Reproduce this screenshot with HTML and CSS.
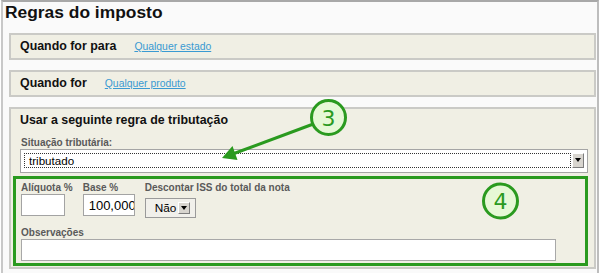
FILE: index.html
```html
<!DOCTYPE html>
<html lang="pt">

<head>
  <meta charset="UTF-8">
  <title>Regras do imposto</title>
  <link rel="stylesheet" href="styles.css">
</head>

<body>

  <div class="panel">
    <h1 class="title">Regras do imposto</h1>

    <div class="rule">
      <span class="rule-name">Quando for para</span>
      <a href="#" class="rule-link">Qualquer estado</a>
    </div>

    <div class="rule">
      <span class="rule-name">Quando for</span>
      <a href="#" class="rule-link">Qualquer produto</a>
    </div>

    <div class="rule rule-body">
      <div class="rule-name">Usar a seguinte regra de tributação</div>

      <div class="field-label first-label">Situação tributária:</div>
      <div class="select select-wide">
        <span class="select-focus">tributado</span>
        <span class="select-btn"></span>
      </div>

      <div class="field-row">
        <div class="field">
          <div class="field-label">Alíquota %</div>
          <input class="input input-aliquota" type="text" value="">
        </div>
        <div class="field">
          <div class="field-label">Base %</div>
          <input class="input input-base" type="text" value="100,000">
        </div>
        <div class="field">
          <div class="field-label">Descontar ISS do total da nota</div>
          <div class="select select-small">
            <span class="select-text">Não</span>
            <span class="select-btn"></span>
          </div>
        </div>
      </div>

      <div class="field obs">
        <div class="field-label">Observações</div>
        <div class="textarea"></div>
      </div>
    </div>
  </div>

  <!-- annotation marks drawn over the form -->
  <svg class="marks" width="600" height="273" viewBox="0 0 600 273">
    <rect x="14.5" y="177.5" width="572" height="87" fill="none" stroke="#2a9a1f" stroke-width="3" />
    <line x1="312" y1="124.5" x2="234" y2="153.5" stroke="#2a9a1f" stroke-width="3" />
    <polygon points="222,158 232.5,146 237.5,160" fill="#2a9a1f" />
    <circle cx="328.5" cy="117.5" r="17" fill="#e6f8d6" stroke="#2a9a1f" stroke-width="3" />
    <text class="mark-num" x="328.5" y="125.5">3</text>
    <circle cx="500.5" cy="201" r="17" fill="#e6f8d6" stroke="#2a9a1f" stroke-width="3" />
    <text class="mark-num" x="500.5" y="209">4</text>
  </svg>

</body>

</html>
```

FILE: styles.css
```css
* {
  box-sizing: border-box;
}

body {
  margin: 0;
  background: #fff;
  font-family: "Liberation Sans", Arial, sans-serif;
  color: #111;
  position: relative;
  overflow: hidden;
}

.panel {
  margin-left: 1px;
  width: 598px;
  height: 273px;
  background: #fafafa;
  border-top: 2px solid #a8a8a8;
  border-left: 2px solid #c8c8c8;
  border-right: 2px solid #bdbdbd;
  padding: 0 1px 0 2px;
}

.title {
  margin: 0 0 11px 0;
  padding: 0;
  font-size: 17.4px;
  line-height: 20px;
  font-weight: bold;
  color: #111;
}

.rule {
  display: flex;
  align-items: baseline;
  gap: 18px;
  background: #f0efe4;
  border: 2px solid #cacac6;
  padding: 0 6px 0 9px;
  margin: 0 0 10px 4px;
  line-height: 22px;
}

.rule-name {
  font-size: 12.4px;
  font-weight: bold;
  color: #111;
}

.rule-link {
  font-size: 10.4px;
  color: #3a9ad2;
  text-decoration: underline;
}

.rule-body {
  display: block;
  padding-bottom: 6px;
}

.field-label {
  font-size: 10px;
  line-height: 12px;
  font-weight: bold;
  color: #5a5a5a;
  white-space: nowrap;
}

.first-label {
  margin-top: 6px;
  padding-left: 1px;
}

.select {
  display: flex;
  align-items: center;
  background: #fff;
  border: 1px solid #a5a5a5;
}

.select-wide {
  height: 24px;
  padding: 3px 3px 4px 3px;
  gap: 1px;
}

.select-focus {
  flex: 1;
  height: 15px;
  border: 1px dotted #333;
  font-size: 11.6px;
  line-height: 13px;
  padding-left: 4px;
  color: #000;
}

.select-btn {
  position: relative;
  width: 12px;
  height: 15px;
  background: #d8d5cf;
  border: 1px solid;
  border-color: #fff #7d7d7d #7d7d7d #fff;
}

.select-btn::after {
  content: "";
  position: absolute;
  left: 2px;
  top: 4px;
  border-left: 3px solid transparent;
  border-right: 3px solid transparent;
  border-top: 4px solid #000;
}

.select-small {
  width: 51px;
  height: 20px;
  margin-top: 4px;
  padding: 0 5px 0 9px;
  background: #f1f0eb;
  border-color: #9a9a9a;
  justify-content: space-between;
}

.select-small .select-btn {
  height: 12px;
}

.select-small .select-btn::after {
  top: 3px;
}

.select-text {
  font-size: 11.8px;
  color: #000;
}

.field-row {
  display: flex;
  gap: 10px;
  margin-top: 9px;
  padding-left: 1px;
}

.field {
  display: flex;
  flex-direction: column;
  align-items: flex-start;
}

.input {
  margin: 0;
  height: 22px;
  border: 1px solid #a3a3a3;
  background: #fff;
  font-family: "Liberation Sans", Arial, sans-serif;
  font-size: 13px;
  color: #000;
  padding: 0 0 0 5px;
  outline: none;
}

.input-aliquota {
  width: 44px;
}

.input-base {
  width: 52px;
}

.obs {
  margin-top: 9px;
  padding-left: 1px;
}

.textarea {
  width: 535px;
  height: 22px;
  background: #fff;
  border: 1px solid #a8a8a8;
}

.marks {
  position: absolute;
  top: 0;
  left: 0;
}

.mark-num {
  font-family: "DejaVu Sans", sans-serif;
  font-size: 22px;
  fill: #2a9a1f;
  text-anchor: middle;
}
```
